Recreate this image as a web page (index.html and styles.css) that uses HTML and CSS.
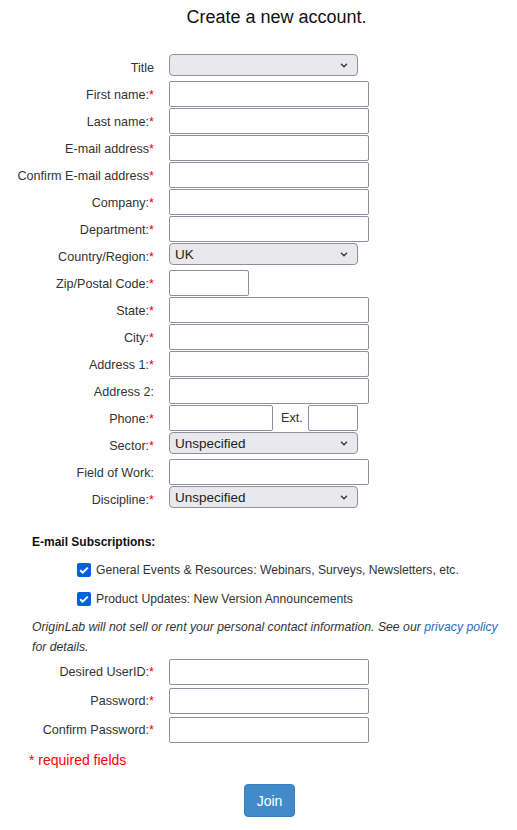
FILE: index.html
```html
<!DOCTYPE html>
<html lang="en">
<head>
<meta charset="utf-8">
<title>Create a new account</title>
<link rel="stylesheet" href="styles.css">
</head>
<body>
<div class="page">
  <h1 class="title">Create a new account.</h1>

  <div class="form">
    <label class="lbl">Title</label>
    <select class="sel"><option></option></select>

    <label class="lbl">First name:<span class="req">*</span></label>
    <input class="txt" type="text">

    <label class="lbl">Last name:<span class="req">*</span></label>
    <input class="txt" type="text">

    <label class="lbl">E-mail address<span class="req">*</span></label>
    <input class="txt" type="text">

    <label class="lbl">Confirm E-mail address<span class="req">*</span></label>
    <input class="txt" type="text">

    <label class="lbl">Company:<span class="req">*</span></label>
    <input class="txt" type="text">

    <label class="lbl">Department:<span class="req">*</span></label>
    <input class="txt" type="text">

    <label class="lbl">Country/Region:<span class="req">*</span></label>
    <select class="sel"><option>UK</option></select>

    <label class="lbl">Zip/Postal Code:<span class="req">*</span></label>
    <input class="txt txt-zip" type="text">

    <label class="lbl">State:<span class="req">*</span></label>
    <input class="txt" type="text">

    <label class="lbl">City:<span class="req">*</span></label>
    <input class="txt" type="text">

    <label class="lbl">Address 1:<span class="req">*</span></label>
    <input class="txt" type="text">

    <label class="lbl">Address 2:</label>
    <input class="txt" type="text">

    <label class="lbl">Phone:<span class="req">*</span></label>
    <div class="phone">
      <input class="txt txt-phone" type="text">
      <span class="ext-lbl">Ext.</span>
      <input class="txt txt-ext" type="text">
    </div>

    <label class="lbl">Sector:<span class="req">*</span></label>
    <select class="sel"><option>Unspecified</option></select>

    <label class="lbl">Field of Work:</label>
    <input class="txt" type="text">

    <label class="lbl">Discipline:<span class="req">*</span></label>
    <select class="sel"><option>Unspecified</option></select>
  </div>

  <div class="subs-head">E-mail Subscriptions:</div>
  <div class="subs">
    <label class="sub-row"><input class="chk" type="checkbox" checked><span>General Events &amp; Resources: Webinars, Surveys, Newsletters, etc.</span></label>
    <label class="sub-row"><input class="chk" type="checkbox" checked><span>Product Updates: New Version Announcements</span></label>
  </div>

  <p class="privacy">OriginLab will not sell or rent your personal contact information. See our <a class="link" href="#">privacy policy</a> for details.</p>

  <div class="form form-account">
    <label class="lbl">Desired UserID:<span class="req">*</span></label>
    <input class="txt" type="text">

    <label class="lbl">Password:<span class="req">*</span></label>
    <input class="txt" type="password">

    <label class="lbl">Confirm Password:<span class="req">*</span></label>
    <input class="txt" type="password">
  </div>

  <div class="required">* required fields</div>

  <div class="actions">
    <button class="btn" type="button">Join</button>
  </div>
</div>
</body>
</html>
```

FILE: styles.css
```css
html, body {
  margin: 0;
  padding: 0;
  background: #fff;
}

body {
  font-family: "Liberation Sans", Arial, sans-serif;
  color: #333;
}

.page {
  width: 517px;
}

.title {
  margin: 7px 0 0;
  padding-left: 36px;
  font-size: 18px;
  line-height: 21px;
  font-weight: normal;
  text-align: center;
  color: #111;
}

.form {
  display: grid;
  grid-template-columns: 154px 200px;
  grid-auto-rows: 27px;
  column-gap: 15px;
  margin-top: 26px;
}

.lbl {
  align-self: center;
  text-align: right;
  font-size: 12.6px;
  white-space: nowrap;
  color: #333;
}

.req {
  color: #f00;
}

.txt {
  align-self: start;
  box-sizing: border-box;
  width: 200px;
  height: 26px;
  margin: 0;
  padding: 0 4px;
  border: 1px solid #8f8f9d;
  border-radius: 2px;
  background: #fff;
  font: 13.5px "Liberation Sans", Arial, sans-serif;
}

.txt-zip {
  width: 80px;
}

.phone {
  display: flex;
  align-items: center;
  align-self: start;
}

.txt-phone {
  width: 104px;
}

.ext-lbl {
  margin: 0 5px 0 8px;
  font-size: 12.6px;
  color: #333;
}

.txt-ext {
  width: 50px;
}

.sel {
  align-self: start;
  box-sizing: border-box;
  width: 189px;
  height: 22px;
  margin: 0;
  padding: 0 20px 0 5px;
  border: 1px solid #8f8f9d;
  border-radius: 4px;
  background-color: #e9e9ed;
  background-image: url("data:image/svg+xml,%3Csvg xmlns='http://www.w3.org/2000/svg' width='8' height='5' viewBox='0 0 8 5'%3E%3Cpath d='M1 0.8l3 3 3-3' fill='none' stroke='%23333' stroke-width='1.3'/%3E%3C/svg%3E");
  background-repeat: no-repeat;
  background-position: right 9px center;
  background-size: 8px 5px;
  appearance: none;
  -webkit-appearance: none;
  font: 13.5px "Liberation Sans", Arial, sans-serif;
  color: #1b1b1b;
}

.subs-head {
  margin: 21px 0 0 32px;
  font-size: 12px;
  line-height: 16px;
  font-weight: bold;
  color: #111;
}

.subs {
  margin: 5px 0 0 77px;
}

.sub-row {
  display: flex;
  align-items: center;
  height: 29px;
  font-size: 12.2px;
  color: #333;
}

.chk {
  appearance: none;
  -webkit-appearance: none;
  width: 14px;
  height: 14px;
  margin: 0 5px 0 0;
  border-radius: 2px;
  background-color: #0060df;
  background-image: url("data:image/svg+xml,%3Csvg xmlns='http://www.w3.org/2000/svg' width='14' height='14' viewBox='0 0 14 14'%3E%3Cpath d='M3.2 7.2l2.5 2.5L10.8 4.6' fill='none' stroke='%23fff' stroke-width='2'/%3E%3C/svg%3E");
  background-repeat: no-repeat;
}

.privacy {
  width: 472px;
  margin: 4px 0 0 32px;
  font-size: 12.25px;
  line-height: 20px;
  font-style: italic;
  color: #333;
}

.link {
  color: #2a6db8;
  text-decoration: none;
}

.form-account {
  grid-auto-rows: 26px;
  row-gap: 3px;
  margin-top: 2px;
}

.required {
  margin: 9px 0 0 29px;
  font-size: 14px;
  line-height: 16px;
  color: #f00;
}

.actions {
  display: flex;
  margin: 16px 0 0 244px;
}

.btn {
  width: 51px;
  height: 33px;
  padding: 0;
  border: 1px solid #3a7fbd;
  border-radius: 4px;
  background: #428bca;
  color: #fff;
  font: 14px "Liberation Sans", Arial, sans-serif;
}
```
